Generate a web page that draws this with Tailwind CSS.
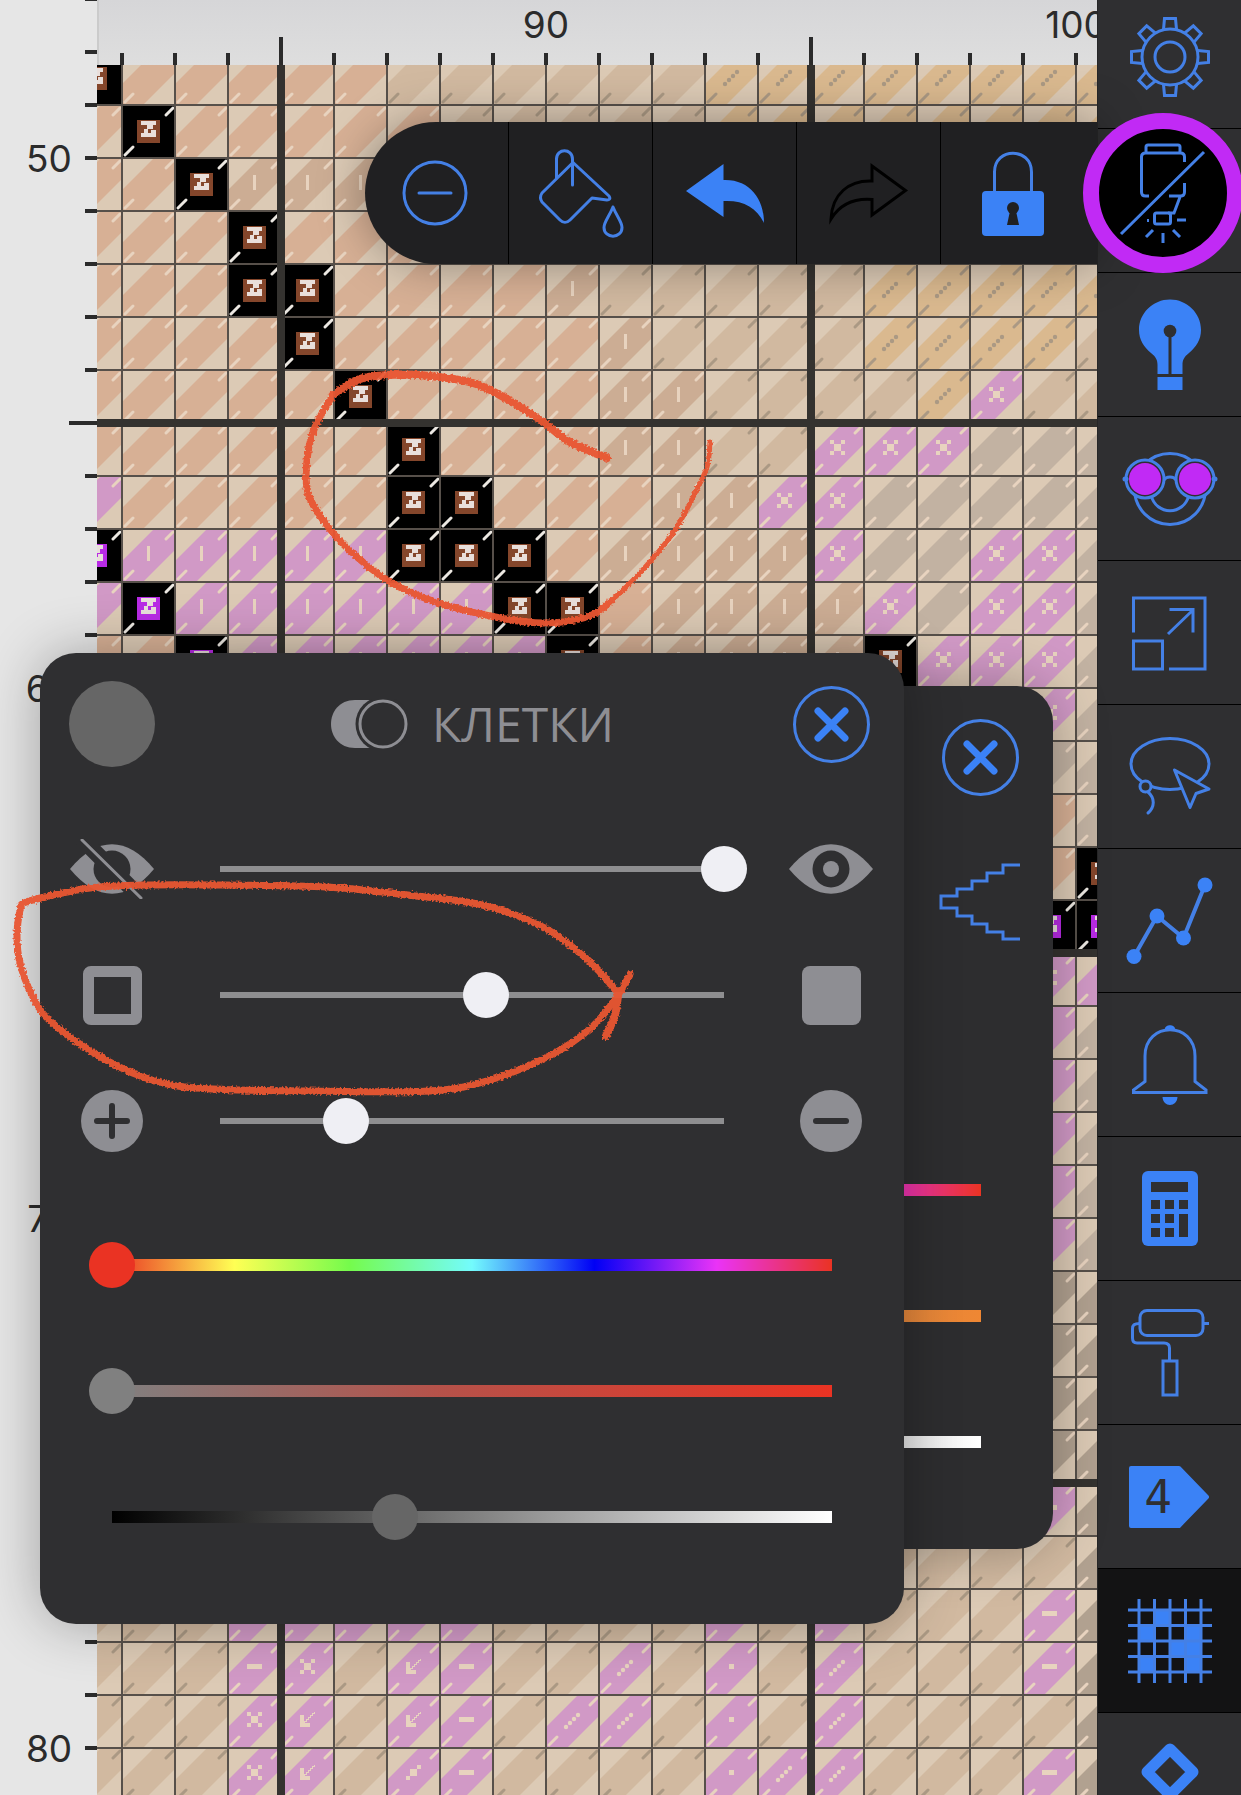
<!DOCTYPE html>
<html lang="ru">
<head>
    <meta charset="UTF-8">
    <meta name="viewport" content="width=device-width, initial-scale=1.0">
    <title>Клетки</title>
    <script src="https://cdn.jsdelivr.net/npm/@tailwindcss/browser@4"></script>
</head>
<body class="bg-[#e6e6e6] font-['Inter',sans-serif]">
<div class="relative flex h-screen overflow-hidden">

    <!-- Row ruler -->
    <svg id="rowRuler" class="h-full w-[97px] shrink-0 text-[37px]" fill="#2b2b2b" font-family="Inter, sans-serif"></svg>

    <!-- Chart -->
    <main class="flex min-w-0 flex-1 flex-col">
        <svg id="colRuler" class="h-[65px] w-full shrink-0 border-l-2 border-[#cbcbcb] bg-linear-to-b from-[#d6d6d8] to-[#dedede] text-[37px]" fill="#2b2b2b" font-family="Inter, sans-serif"></svg>
        <svg id="chart" class="min-h-0 w-full flex-1 bg-[#dccab5]">
            <defs>
                <path id="band" d="M0 53V32L32 0H53V21L21 53Z"/>
                <path id="ticks" d="M44 10l7-7M3 50l8-8" fill="none" stroke-width="3" stroke-linecap="round"/>
                <path id="bar" d="M25 17h3v15h-3z"/>
                <path id="cross" d="M19 17h4v4h7v-4h4v4h-4v7h4v4h-4v-4h-7v4h-4v-4h4v-7h-4z"/>
                <path id="dash" d="M19 22h15v5H19z"/>
                <path id="dot" d="M24 22h5v5h-5z"/>
                <path id="diag" d="M30 17h4v4h-4v7h-7v4h-4v-4h4v-7h7z"/>
                <path id="arrow" d="M19 20h4v6h2v-2h2v-2h2v-2h2v-2h2v-1h1v2h-2v2h-2v2h-2v2h-2v2h-2v1h5v4H19z"/>
                <g id="dots"><circle cx="20" cy="32" r="2.2"/><circle cx="24" cy="28" r="2.2"/><circle cx="28" cy="24" r="2.2"/><circle cx="32" cy="20" r="2.2"/></g>
                <path id="letter" d="M19 16h15v4H19zM25 20h6v4h-6zM22 24h4v4h-4zM29 25h5v3h-5zM19 28h15v4H19z" fill="#e9dfdb"/>
            </defs>
        </svg>
    </main>

    <!-- Side toolbar -->
    <nav class="-mt-[15px] flex w-36 shrink-0 flex-col border-l border-[#262627] bg-[#2f2f31] text-[#4480e6]">
        <button aria-label="Settings" class="flex h-36 shrink-0 items-center justify-center border-b border-black">
            <svg class="size-22 overflow-visible" viewBox="0 0 88 88" fill="none" stroke="currentColor" stroke-width="3">
                <circle cx="44" cy="44" r="28"/><circle cx="44" cy="44" r="15"/>
                <path id="tooth" d="M37.500 16.500L38.500 5.500H49.500L50.500 16.500"/>
                <use href="#tooth" transform="rotate(45 44 44)"/><use href="#tooth" transform="rotate(90 44 44)"/>
                <use href="#tooth" transform="rotate(135 44 44)"/><use href="#tooth" transform="rotate(180 44 44)"/>
                <use href="#tooth" transform="rotate(225 44 44)"/><use href="#tooth" transform="rotate(270 44 44)"/>
                <use href="#tooth" transform="rotate(315 44 44)"/>
            </svg>
        </button>
        <div class="h-36 shrink-0 border-b border-black"></div>
        <button aria-label="Hint" class="flex h-36 shrink-0 items-center justify-center border-b border-black">
            <svg class="size-22 overflow-visible" viewBox="0 0 88 88">
                <path fill="#3b82f6" d="M44-1.500C61-1.500 75 12 75 29C75 39 70 46 63 52C58 56 56.500 59 56.500 64V73H31.500V64C31.500 59 30 56 25 52C18 46 13 39 13 29C13 12 27-1.500 44-1.500ZM31.500 76h25v13h-25z"/>
                <circle cx="44" cy="30" r="6.300" fill="#2f2f31"/><path d="M44 34V73" stroke="#2f2f31" stroke-width="3"/>
            </svg>
        </button>
        <button aria-label="View mode" class="flex h-36 shrink-0 items-center justify-center border-b border-black">
            <svg class="size-22 overflow-visible" viewBox="0 0 88 88" fill="none" stroke="currentColor" stroke-width="3">
                <circle cx="44" cy="44" r="35.500"/>
                <path d="M25 50C30 71 58 71 63 50"/>
                <circle cx="19" cy="34" r="19" fill="#2f2f31"/><circle cx="69" cy="34" r="19" fill="#2f2f31"/>
                <circle cx="19" cy="34" r="16" fill="#c12af5" stroke="none"/><circle cx="69" cy="34" r="16" fill="#c12af5" stroke="none"/>
                <path d="M38 35C40 31 48 31 50 35"/>
                <path d="M-1 34h1M88 34h1" stroke-width="5" stroke-linecap="round"/>
            </svg>
        </button>
        <button aria-label="Resize" class="flex h-36 shrink-0 items-center justify-center border-b border-black">
            <svg class="size-22 overflow-visible" viewBox="0 0 88 88" fill="none" stroke="currentColor" stroke-width="3">
                <path d="M7.500 43.500V9H79V80H43M7.500 52H36.500V80H7.500ZM42 45L67 21M43.500 20.500H67V43.500"/>
            </svg>
        </button>
        <button aria-label="Lasso" class="flex h-36 shrink-0 items-center justify-center border-b border-black">
            <svg class="size-22 overflow-visible" viewBox="0 0 88 88" fill="none" stroke="currentColor" stroke-width="3" stroke-linejoin="round" stroke-linecap="round">
                <ellipse cx="44" cy="31" rx="39" ry="25.500"/>
                <path fill="#2f2f31" d="M48.500 37L83 56L70 60.500L64 74.500Z"/>
                <circle cx="19.500" cy="53.500" r="5.500" fill="#2f2f31"/>
                <path d="M22 59C29 65 29 74 22 80"/>
            </svg>
        </button>
        <button aria-label="Statistics" class="flex h-36 shrink-0 items-center justify-center border-b border-black">
            <svg class="size-22 overflow-visible" viewBox="0 0 88 88" fill="#3b82f6">
                <path d="M8 79.500L31 39L57.500 61L79 8" fill="none" stroke="currentColor" stroke-width="4"/>
                <circle cx="8" cy="79.500" r="7.500"/><circle cx="31" cy="39" r="7.500"/><circle cx="57.500" cy="61" r="7.500"/><circle cx="79" cy="8" r="7.500"/>
            </svg>
        </button>
        <button aria-label="Reminders" class="flex h-36 shrink-0 items-center justify-center border-b border-black">
            <svg class="size-22 overflow-visible" viewBox="0 0 88 88" fill="none" stroke="currentColor" stroke-width="3">
                <path d="M7.500 71.500V69L19 60.500V35C19 0 69 0 69 35V60.500L80 69V71.500Z"/>
                <path d="M39 8C39 3 49 3 49 8ZM36.500 76H51.500C51 86.500 37 86.500 36.500 76Z" fill="#3b82f6" stroke="none"/>
            </svg>
        </button>
        <button aria-label="Calculator" class="flex h-36 shrink-0 items-center justify-center border-b border-black">
            <svg class="size-22 overflow-visible" viewBox="0 0 88 88" fill="#2f2f31">
                <rect x="16" y="6" width="56" height="75" rx="6" fill="#3b82f6"/>
                <path d="M25 17h37v10H25zM25 35h9v9h-9zM39 35h9v9h-9zM53 35h9v9h-9zM25 49h9v9h-9zM39 49h9v9h-9zM53 49h9v23h-9zM25 63h9v9h-9zM39 63h9v9h-9z"/>
            </svg>
        </button>
        <button aria-label="Paint roller" class="flex h-36 shrink-0 items-center justify-center border-b border-black">
            <svg class="size-22 overflow-visible" viewBox="0 0 88 88" fill="none" stroke="currentColor" stroke-width="3">
                <rect x="14" y="1.500" width="63" height="25" rx="7"/>
                <path d="M77 14.500h6M14 14.500C8 14.500 6.500 16 6.500 20V29C6.500 32.500 8 34 11 34H38C42 34 43.500 36 43.500 39V51M37 52H51V86H37Z"/>
            </svg>
        </button>
        <button aria-label="Symbols" class="flex h-36 shrink-0 items-center justify-center border-b border-black">
            <svg class="size-22 overflow-visible" viewBox="0 0 88 88">
                <path d="M5 15H53L81 44L53 73H5Z" fill="#3b82f6" stroke="#3b82f6" stroke-width="4" stroke-linejoin="round"/>
                <text x="32" y="60" text-anchor="middle" font-family="DejaVu Sans Mono, monospace" font-size="46" fill="#2f2f31">4</text>
            </svg>
        </button>
        <button aria-label="Cells" class="flex h-36 shrink-0 items-center justify-center border-b border-black bg-[#131314]">
            <svg class="size-22 overflow-visible" viewBox="0 0 88 88">
                <path d="M28 13h16v15H28zM13 28h15v16H13zM59 28h16v16H59zM44 44h31v15H44zM13 59h15v16H13zM59 59h16v16H59z" fill="#3b82f6"/>
                <path d="M13 2V86M28.500 2V86M44 2V86M59.500 2V86M75 2V86M2 13H86M2 28.500H86M2 44H86M2 59.500H86M2 75H86" stroke="currentColor" stroke-width="3"/>
            </svg>
        </button>
        <button aria-label="Markers" class="flex h-36 shrink-0 items-center justify-center">
            <svg class="size-22 overflow-visible" viewBox="0 0 88 88">
                <path d="M44 8L67 31L44 54L21 31Z" fill="none" stroke="#3b82f6" stroke-width="11" stroke-linejoin="round"/>
            </svg>
        </button>
    </nav>

    <!-- Quick tools -->
    <div class="absolute -right-0.5 top-[113px] flex items-center">
        <div class="flex overflow-hidden rounded-l-full bg-[#202022] pr-3 text-[#4480e6] shadow-[0_0_48px_rgba(0,0,0,0.35)]">
            <button aria-label="Remove" class="flex h-[142px] w-36 items-center justify-center border-r border-black">
                <svg class="size-22 overflow-visible" viewBox="0 0 88 88" fill="none" stroke="currentColor" stroke-width="3" stroke-linecap="round">
                    <circle cx="42" cy="44" r="31"/><path d="M26 44H58"/>
                </svg>
            </button>
            <button aria-label="Fill" class="flex h-[142px] w-36 items-center justify-center border-r border-black">
                <svg class="size-22 overflow-visible" viewBox="0 0 88 88" fill="none" stroke="currentColor" stroke-width="3" stroke-linecap="round" stroke-linejoin="round">
                    <path d="M36 13.500L72 47C74 50 72 51 70 51L55 49L33 71C30 74 26 74 23 71L5 53C3 50 3 47 5 44Z"/>
                    <path d="M19.500 29V10C19.500-1 35.500-1 35.500 10V36"/>
                    <path d="M76 58C72 68 67 73 67 78.500C67 90 85 90 85 78.500C85 73 80 68 76 58Z"/>
                </svg>
            </button>
            <button aria-label="Undo" class="flex h-[142px] w-36 items-center justify-center border-r border-black">
                <svg class="size-22 overflow-visible" viewBox="0 0 88 88" fill="#3b82f6">
                    <path d="M5 42L42.500 15V31C68 30 83 49 83 74C75 58 62 51 42.500 52V68Z"/>
                </svg>
            </button>
            <button aria-label="Redo" class="flex h-[142px] w-36 items-center justify-center border-r border-black">
                <svg class="size-22 overflow-visible" viewBox="0 0 88 88" fill="none" stroke="#000" stroke-width="3">
                    <path d="M80.500 41.500L47 17V32C24 31 7 45 6 70C14 57 27 49 47 50.500V66Z"/>
                </svg>
            </button>
            <button aria-label="Lock" class="flex h-[142px] w-36 items-center justify-center">
                <svg class="size-22 overflow-visible" viewBox="0 0 88 88">
                    <path d="M25.500 44V23C25.500-2 62.500-2 62.500 23V44" fill="none" stroke="currentColor" stroke-width="3"/>
                    <rect x="13" y="42" width="62" height="45" rx="4" fill="#3b82f6"/>
                    <circle cx="44" cy="59" r="6" fill="#202022"/><path d="M41 62h6l3 14H38z" fill="#202022"/>
                </svg>
            </button>
        </div>
        <button aria-label="Light off" class="-ml-3.5 flex size-40 items-center justify-center rounded-full border-16 border-[#c12af5] bg-black text-[#4480e6]">
            <svg class="size-32 shrink-0" viewBox="0 0 128 128" fill="none" stroke="currentColor" stroke-width="3">
                <path d="M47 24V18Q47 16 49 16H79Q81 16 81 18V24M85.500 33V28Q85.500 24 81.500 24H46.500Q42.500 24 42.500 28V63Q42.500 67 46.500 67H50M70 67H81.500Q85.500 67 85.500 63V54M81 68L75 84H69"/>
                <rect x="55.500" y="84" width="16" height="11" rx="2"/>
                <path d="M22 105L105 23M78 91h9M48 91.500h2M64 104v10M54 101l-7 7M74 101l7 7"/>
            </svg>
        </button>
    </div>

    <!-- Back panel -->
    <section class="absolute left-[190px] right-[188px] top-[686px] rounded-[36px] bg-[#2d2d2f] px-[29px] pb-11 pt-7 shadow-[0_0_56px_rgba(0,0,0,0.3)]">
        <header class="flex h-[86px] items-center justify-end pr-[5px]">
            <button aria-label="Закрыть" class="size-[77px]">
                <svg viewBox="0 0 77 77" fill="none" stroke-linecap="round">
                    <circle cx="38.500" cy="38.500" r="37" stroke="#4480e6" stroke-width="3"/>
                    <path d="M25 25L52 52M52 25L25 52" stroke="#3b82f6" stroke-width="7"/>
                </svg>
            </button>
        </header>
        <div class="mt-[39px] flex h-[126px] items-center justify-end pr-0.5">
            <svg class="h-[78px] w-[84px]" viewBox="0 0 84 78" fill="none" stroke="#4480e6" stroke-width="3">
                <path d="M82 2H65V10H49V18H34V26H19V33H3V45H19V53H34V61H49V69H65V76H82"/>
            </svg>
        </div>
        <div class="mx-5 mt-[162px]">
            <input type="range" aria-label="Оттенок символа" value="0" class="block h-[126px] w-full appearance-none bg-[linear-gradient(to_right,#ea3323,#ffff54_17%,#75fb4c_33%,#73fbfd_50%,#0000f5_67%,#ea33f7_84%,#ea3323)] bg-[length:calc(100%-46px)_12px] bg-center bg-no-repeat [&::-webkit-slider-thumb]:size-[46px] [&::-webkit-slider-thumb]:appearance-none [&::-webkit-slider-thumb]:rounded-full [&::-webkit-slider-thumb]:bg-[#ea3323]">
            <input type="range" aria-label="Насыщенность символа" value="0" class="block h-[126px] w-full appearance-none bg-[linear-gradient(to_right,#808080,#ef8733)] bg-[length:calc(100%-46px)_12px] bg-center bg-no-repeat [&::-webkit-slider-thumb]:size-[46px] [&::-webkit-slider-thumb]:appearance-none [&::-webkit-slider-thumb]:rounded-full [&::-webkit-slider-thumb]:bg-[#808080]">
            <input type="range" aria-label="Яркость символа" value="0" class="block h-[126px] w-full appearance-none bg-[linear-gradient(to_right,#000,#fff)] bg-[length:calc(100%-46px)_12px] bg-center bg-no-repeat [&::-webkit-slider-thumb]:size-[46px] [&::-webkit-slider-thumb]:appearance-none [&::-webkit-slider-thumb]:rounded-full [&::-webkit-slider-thumb]:bg-[#666]">
        </div>
    </section>

    <!-- Cells panel -->
    <section class="absolute left-10 right-[337px] top-[653px] rounded-[36px] bg-[#2f2f31] pb-11 pl-[29px] pr-[31px] pt-7 text-[#8e8e93] shadow-[0_0_56px_rgba(0,0,0,0.3)]">
        <header class="grid h-[86px] grid-cols-[86px_1fr_84px] items-center">
            <div class="size-[86px] rounded-full bg-[#666]"></div>
            <h1 class="flex items-center justify-center gap-6 font-['Open_Sans',sans-serif] text-[48px] font-normal leading-none">
                <svg class="h-[50px] w-[78px]" viewBox="0 0 78 50">
                    <path d="M25 1H40V49H25C-7 49-7 1 25 1Z" fill="currentColor"/>
                    <circle cx="53" cy="25" r="27.500" fill="#2f2f31"/>
                    <circle cx="53" cy="25" r="23" fill="none" stroke="currentColor" stroke-width="3"/>
                </svg>
                КЛЕТКИ
            </h1>
            <button aria-label="Закрыть" class="size-[77px] justify-self-center">
                <svg viewBox="0 0 77 77" fill="none" stroke-linecap="round">
                    <circle cx="38.500" cy="38.500" r="37" stroke="#4480e6" stroke-width="3"/>
                    <path d="M25 25L52 52M52 25L25 52" stroke="#3b82f6" stroke-width="7"/>
                </svg>
            </button>
        </header>

        <div class="mt-[39px]">
            <div class="grid h-[126px] grid-cols-[86px_1fr_84px] items-center gap-x-[42px]">
                <svg class="h-[60px] w-[84px] justify-self-center" viewBox="0 0 84 60">
                    <path d="M0 30C27-3 57-3 84 30C57 63 27 63 0 30Z" fill="currentColor"/>
                    <circle cx="42" cy="30" r="18.500" fill="#2f2f31"/>
                    <path d="M12 0L72 60" stroke="#2f2f31" stroke-width="16"/>
                    <path d="M12 1L71 59" stroke="currentColor" stroke-width="3" stroke-linecap="round"/>
                </svg>
                <input type="range" aria-label="Видимость" value="100" class="h-[46px] w-full appearance-none bg-[linear-gradient(#8e8e90,#8e8e90)] bg-[length:calc(100%-46px)_6px] bg-center bg-no-repeat [&::-webkit-slider-thumb]:size-[46px] [&::-webkit-slider-thumb]:appearance-none [&::-webkit-slider-thumb]:rounded-full [&::-webkit-slider-thumb]:bg-[#efeff4]">
                <svg class="h-[60px] w-[84px]" viewBox="0 0 84 60">
                    <path d="M0 30C27-3 57-3 84 30C57 63 27 63 0 30Z" fill="currentColor"/>
                    <circle cx="42" cy="30" r="18.500" fill="#2f2f31"/>
                    <circle cx="42" cy="30" r="8" fill="currentColor"/>
                </svg>
            </div>
            <div class="grid h-[126px] grid-cols-[86px_1fr_84px] items-center gap-x-[42px]">
                <div class="size-[59px] justify-self-center rounded-lg border-11 border-[#8e8e93]"></div>
                <input type="range" aria-label="Заливка" step="0.1" value="52.7" class="h-[46px] w-full appearance-none bg-[linear-gradient(#8e8e90,#8e8e90)] bg-[length:calc(100%-46px)_6px] bg-center bg-no-repeat [&::-webkit-slider-thumb]:size-[46px] [&::-webkit-slider-thumb]:appearance-none [&::-webkit-slider-thumb]:rounded-full [&::-webkit-slider-thumb]:bg-[#efeff4]">
                <div class="size-[59px] justify-self-center rounded-lg bg-[#8e8e93]"></div>
            </div>
            <div class="grid h-[126px] grid-cols-[86px_1fr_84px] items-center gap-x-[42px]">
                <svg class="size-[62px] justify-self-center" viewBox="0 0 62 62">
                    <circle cx="31" cy="31" r="31" fill="currentColor"/>
                    <path d="M16 31H46M31 16V46" stroke="#2f2f31" stroke-width="6" stroke-linecap="round"/>
                </svg>
                <input type="range" aria-label="Масштаб" value="25" class="h-[46px] w-full appearance-none bg-[linear-gradient(#8e8e90,#8e8e90)] bg-[length:calc(100%-46px)_6px] bg-center bg-no-repeat [&::-webkit-slider-thumb]:size-[46px] [&::-webkit-slider-thumb]:appearance-none [&::-webkit-slider-thumb]:rounded-full [&::-webkit-slider-thumb]:bg-[#efeff4]">
                <svg class="size-[62px] justify-self-center" viewBox="0 0 62 62">
                    <circle cx="31" cy="31" r="31" fill="currentColor"/>
                    <path d="M16 31H46" stroke="#2f2f31" stroke-width="6" stroke-linecap="round"/>
                </svg>
            </div>
        </div>

        <div class="ml-5 mr-[18px] mt-[18px]">
            <input type="range" aria-label="Оттенок" value="0" class="block h-[126px] w-full appearance-none bg-[linear-gradient(to_right,#ea3323,#ffff54_17%,#75fb4c_33%,#73fbfd_50%,#0000f5_67%,#ea33f7_84%,#ea3323)] bg-[length:calc(100%-46px)_12px] bg-center bg-no-repeat [&::-webkit-slider-thumb]:size-[46px] [&::-webkit-slider-thumb]:appearance-none [&::-webkit-slider-thumb]:rounded-full [&::-webkit-slider-thumb]:bg-[#ea3323]">
            <input type="range" aria-label="Насыщенность" value="0" class="block h-[126px] w-full appearance-none bg-[linear-gradient(to_right,#808080,#b5524a_45%,#ea3323)] bg-[length:calc(100%-46px)_12px] bg-center bg-no-repeat [&::-webkit-slider-thumb]:size-[46px] [&::-webkit-slider-thumb]:appearance-none [&::-webkit-slider-thumb]:rounded-full [&::-webkit-slider-thumb]:bg-[#808080]">
            <input type="range" aria-label="Яркость" step="0.1" value="39.3" class="block h-[126px] w-full appearance-none bg-[linear-gradient(to_right,#000,#fff)] bg-[length:calc(100%-46px)_12px] bg-center bg-no-repeat [&::-webkit-slider-thumb]:size-[46px] [&::-webkit-slider-thumb]:appearance-none [&::-webkit-slider-thumb]:rounded-full [&::-webkit-slider-thumb]:bg-[#666]">
        </div>
    </section>

    <!-- Crayon marks -->
    <svg id="marks" class="pointer-events-none absolute inset-0 size-full" fill="none" stroke="#e95632" stroke-linecap="round" stroke-linejoin="round">
        <defs>
            <filter id="rough" x="0" y="0" width="100%" height="100%" filterUnits="userSpaceOnUse">
                <feTurbulence type="fractalNoise" baseFrequency="0.5" numOctaves="2"/>
                <feDisplacementMap in="SourceGraphic" scale="5" xChannelSelector="R" yChannelSelector="G"/>
            </filter>
        </defs>
        <g id="strokes" filter="url(#rough)" opacity="0.95"></g>
    </svg>
</div>

<script>
    const CELL = 53;

    // one letter per stitch, rows from the top of the chart
    const rows = [
        "naaaaaccccccdddddddd",
        "anaaaaacccccdddddddd",
        "aanbbbbbccccdddddddd",
        "aaanaaaabcccdddddddd",
        "aaannaaaabcccccddddd",
        "aaaanaaaaabccccddddc",
        "aaaaanaaaabbccccdXcc",
        "aaaaaanaaabbccXXXggg",
        "IaaaaannaaabbXXggggg",
        "mIIIIInnnabbbbXggXXg",
        "ImIIIIIInnabbbbXgXXg",
        "aamIIIIIInabbbbnXXXg",
        "ccccccccccccccccccXg",
        "ccccccccccccccccccgg",
        "ccccccccccccccccccag",
        "ccccccccccccccccccan",
        "ccccccccccccccccccmm",
        "ccccccccccccccccccXI",
        "cccccccccccccccccc.g",
        "cccccccccccccccccc.g",
        "cccccccccccccccccc.g",
        "cccccccccccccccccc.g",
        "cccccccccccccccccc.g",
        "cccccccccccccccccchh",
        "cccccccccccccccccchh",
        "cccccccccccccccccchh",
        "cccccccccccccccccchh",
        "cccccccccccccccccc-h",
        "ccccccccccccccccccch",
        "ccc--X//cccc.c:ccc-h",
        "ccc-Xc/-cc:c.c:ccc-h",
        "cccX/c/-c::c.c:cccch",
        "cccX/c%-cccc.::ccc-h"
    ];

    const light = "#e8d3bf";
    const dark = "#ab9984";
    const kinds = {
        a: { band: "#d7b095", tick: light },
        b: { band: "#ccad94", tick: light, sign: "bar" },
        c: { band: "#d1b9a0", tick: dark },
        d: { band: "#dab98f", tick: dark, sign: "dots" },
        g: { band: "#c2b2a2", tick: light },
        h: { band: "#b1a190", tick: light },
        I: { band: "#d199c6", tick: light, sign: "bar" },
        X: { band: "#d199c6", tick: light, sign: "cross" },
        "-": { band: "#d199c6", tick: light, sign: "dash" },
        "/": { band: "#d199c6", tick: light, sign: "arrow" },
        "%": { band: "#d199c6", tick: light, sign: "diag" },
        ".": { band: "#d199c6", tick: light, sign: "dot" },
        ":": { band: "#d199c6", tick: light, sign: "dots" },
        n: { solid: "#84462b" },
        m: { solid: "#b92be6" }
    };

    function drawCell(kind, x, y) {
        const k = kinds[kind];
        if (k.solid) {
            return `<g transform="translate(${x} ${y})"><path d="M0 0h53v53H0z"/><path d="M15 15h23v23H15z" fill="${k.solid}"/><use href="#letter"/><use href="#ticks" stroke="#ece8e2"/></g>`;
        }
        const sign = k.sign ? `<use href="#${k.sign}" fill="${k.tick}"/>` : "";
        return `<g transform="translate(${x} ${y})"><use href="#band" fill="${k.band}"/><use href="#ticks" stroke="${k.tick}"/>${sign}</g>`;
    }

    // first column starts 28px left of the chart, first row 13px above it
    let out = "";
    rows.forEach((row, r) => {
        [...row].forEach((kind, c) => {
            out += drawCell(kind, c * CELL - 28, r * CELL - 13);
        });
    });
    for (let i = 1; i < 34; i++) {
        if (i % 10 !== 7) out += `<rect x="0" y="${i * CELL - 14}" width="100%" height="2" fill="#57504a"/>`;
        if (i % 10 !== 4) out += `<rect x="${i * CELL - 29}" y="0" width="2" height="100%" fill="#57504a"/>`;
    }
    [7, 17, 27].forEach(i => out += `<rect x="0" y="${i * CELL - 17}" width="100%" height="8" fill="#34322f"/>`);
    [4, 14].forEach(i => out += `<rect x="${i * CELL - 32}" y="0" width="8" height="100%" fill="#34322f"/>`);
    document.getElementById("chart").insertAdjacentHTML("beforeend", out);

    // Rulers
    let left = "";
    for (let i = 0; i < 34; i++) {
        const y = i * CELL + 52;
        left += i % 10 === 7 ? `<rect x="69" y="${y - 2}" width="28" height="4"/>` : `<rect x="85" y="${y - 2}" width="12" height="4"/>`;
        if (i % 10 === 2) left += `<text x="49" y="${y + 14}" text-anchor="middle">${50 + i - 2}</text>`;
    }
    left += `<rect x="85" y="-2" width="12" height="3"/>`;
    document.getElementById("rowRuler").innerHTML = left;

    let cols = "";
    for (let i = 1; i < 20; i++) {
        const x = i * CELL - 30;
        cols += i % 10 === 4 ? `<rect x="${x - 2}" y="37" width="4" height="28"/>` : `<rect x="${x - 2}" y="53" width="4" height="12"/>`;
        if (i % 10 === 9) cols += `<text x="${x}" y="38" text-anchor="middle">${90 + i - 9}</text>`;
    }
    document.getElementById("colRuler").innerHTML = cols;

    // Crayon strokes, smoothed through their points
    function curve(points, width) {
        let d = `M${points[0]}`;
        for (let i = 0; i < points.length - 1; i++) {
            const p0 = points[i - 1] || points[i], p1 = points[i], p2 = points[i + 1], p3 = points[i + 2] || p2;
            d += `C${p1[0] + (p2[0] - p0[0]) / 6} ${p1[1] + (p2[1] - p0[1]) / 6} ${p2[0] - (p3[0] - p1[0]) / 6} ${p2[1] - (p3[1] - p1[1]) / 6} ${p2}`;
        }
        return `<path d="${d}" stroke-width="${width}"/>`;
    }
    document.getElementById("strokes").innerHTML =
        curve([[607, 458], [570, 442], [543, 422], [507, 399], [473, 383], [430, 376], [387, 375], [357, 380], [333, 395]], 8) +
        curve([[333, 395], [315, 427], [307, 460], [308, 493], [323, 520], [347, 548], [387, 580], [430, 600], [490, 616], [543, 623], [587, 617], [610, 602]], 7) +
        curve([[610, 602], [640, 573], [673, 533], [693, 497], [707, 467], [710, 442]], 5) +
        curve([[618, 993], [588, 960], [543, 927], [482, 905], [408, 895], [327, 887], [224, 885], [143, 885], [90, 888], [45, 897], [24, 903], [20, 910], [17, 937], [20, 963], [31, 993], [49, 1020], [94, 1053], [143, 1077], [196, 1088], [306, 1091], [429, 1091], [490, 1080], [551, 1055], [592, 1027], [618, 995], [630, 974]], 7) +
        curve([[618, 995], [615, 1015], [606, 1036]], 8);
</script>
</body>
</html>
